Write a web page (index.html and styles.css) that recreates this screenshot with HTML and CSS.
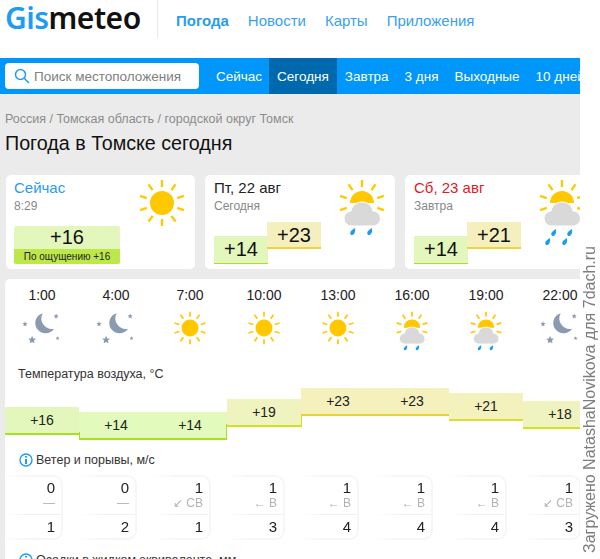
FILE: index.html
```html
<!DOCTYPE html>
<html lang="ru">
<head>
<meta charset="utf-8">
<title>Погода в Томске сегодня</title>
<link rel="stylesheet" href="styles.css">
</head>
<body>
<svg class="defs" width="0" height="0" aria-hidden="true">
  <defs>
    <g id="rays" stroke="#ffc800" stroke-width="2.4" stroke-linecap="butt">
      <path d="M24 1v7M24 40v7M37.5 5.4l-4.1 5.7M10.6 42.6l4.1-5.7M45.9 16.9l-6.7 2.2M2.100 31.100l6.700-2.200M45.900 31.100l-6.700-2.200M2.100 16.900l6.700 2.200M37.500 42.600l-4.100-5.700M10.500 5.400l4.100 5.700"/>
    </g>
    <symbol id="sun" viewBox="0 0 48 48" overflow="visible">
      <use href="#rays"/>
      <circle cx="24" cy="24" r="12" fill="#ffc800"/>
    </symbol>
    <g id="cloud-sun">
      <path d="M24 1v7M37.500 5.400l-4.100 5.700M45.900 16.900l-6.700 2.200M2.100 16.900l6.700 2.200M10.500 5.400l4.100 5.700M2.100 31.100l6.700-2.200M45.900 31.100l-6.700-2.200" stroke="#ffc800" stroke-width="2.400" fill="none"/>
      <path d="M12 24a12 12 0 0 1 24 0z" fill="#ffc800"/>
      <path d="M14 47a7.500 7.500 0 0 1-1-15c1-6 6-9 11-9s10 3 11 9a7.500 7.500 0 0 1 0 15z" fill="#d9d9d9" stroke="#fff" stroke-width="1"/>
    </g>
    <symbol id="rain2" viewBox="0 0 48 60" overflow="visible">
      <use href="#cloud-sun"/>
      <path d="M13 52c2-2 4-3 4-3 .5 3 0 6-2.500 7-2 .5-3-2-1.500-4zM30 52c2-2 4-3 4-3 .5 3 0 6-2.500 7-2 .5-3-2-1.500-4z" fill="#1e9df0"/>
    </symbol>
    <symbol id="rain4" viewBox="0 0 48 60" overflow="visible">
      <use href="#cloud-sun"/>
      <path d="M14 53c2-2 4-3 4-3 .5 3 0 6-2.500 7-2 .5-3-2-1.500-4zM30 53c2-2 4-3 4-3 .5 3 0 6-2.500 7-2 .5-3-2-1.500-4zM8 62c2-2 4-3 4-3 .5 3 0 6-2.500 7-2 .5-3-2-1.500-4zM25 62c2-2 4-3 4-3 .5 3 0 6-2.500 7-2 .5-3-2-1.500-4z" fill="#1e9df0"/>
    </symbol>
    <symbol id="moon" viewBox="0 0 48 48" overflow="visible">
      <path d="M25 3a14.500 14.500 0 1 0 16 22a15 15 0 0 1-16-22z" fill="#8a9bb0"/>
      <path d="M0 14.500l1 2.500 2.500.3-1.900 1.700.6 2.600L0 20.300l-2.200 1.300.6-2.600-1.900-1.700 2.500-.3zM44 3.500l1 2.500 2.500.3-1.900 1.700.6 2.600L44 9.300l-2.200 1.300.6-2.600-1.900-1.700 2.500-.3zM10 35l1.600 3.700 4 .4-3 2.700.9 3.900-3.500-2-3.500 2 .9-3.900-3-2.700 4-.4zM46 35.500l.8 1.800 2 .2-1.500 1.300.4 2-1.700-1-1.700 1 .4-2-1.500-1.300 2-.2z" fill="#8a9bb0"/>
    </symbol>
    <symbol id="info" viewBox="0 0 14 14">
      <circle cx="7" cy="7" r="6" fill="none" stroke="#1e9df0" stroke-width="1.400"/>
      <path d="M7 3v1.600M7 6v5" stroke="#1e9df0" stroke-width="2"/>
    </symbol>
  </defs>
</svg>

<div class="watermark">Загружено NatashaNovikova для 7dach.ru</div>

<div class="page">
  <header class="header">
    <a class="logo"><span class="logo-blue">Gis</span>meteo</a>
    <nav class="main-nav">
      <a class="main-link is-current">Погода</a>
      <a class="main-link">Новости</a>
      <a class="main-link">Карты</a>
      <a class="main-link">Приложения</a>
    </nav>
  </header>

  <div class="tabbar">
    <div class="search">
      <svg class="search-icon" viewBox="0 0 16 16" width="16" height="16"><circle cx="6.500" cy="6.500" r="5" fill="none" stroke="#1e9df0" stroke-width="1.500"/><path d="M10.200 10.200l4.800 4.800" stroke="#1e9df0" stroke-width="1.500"/></svg>
      <span>Поиск местоположения</span>
    </div>
    <a class="tab tab-first">Сейчас</a>
    <a class="tab is-active">Сегодня</a>
    <a class="tab">Завтра</a>
    <a class="tab">3 дня</a>
    <a class="tab">Выходные</a>
    <a class="tab">10 дней</a>
  </div>

  <main class="main">
    <div class="crumbs">Россия / Томская область / городской округ Томск</div>
    <h1 class="title">Погода в Томске сегодня</h1>

    <div class="cards">
      <section class="card card-now">
        <div class="card-head">
          <div>
            <div class="card-title blue">Сейчас</div>
            <div class="card-sub">8:29</div>
          </div>
          <svg class="card-icon sun-now"><use href="#sun"/></svg>
        </div>
        <div class="now-temp">
          <div class="now-value">+16</div>
          <div class="now-feel">По ощущению +16</div>
        </div>
      </section>

      <section class="card card-day">
        <div class="card-title">Пт, 22 авг</div>
        <div class="card-sub">Сегодня</div>
        <div class="range">
          <div class="range-low">+14</div>
          <div class="range-high">+23</div>
        </div>
        <svg class="card-icon weather"><use href="#rain2"/></svg>
      </section>

      <section class="card card-day">
        <div class="card-title red">Сб, 23 авг</div>
        <div class="card-sub">Завтра</div>
        <div class="range">
          <div class="range-low">+14</div>
          <div class="range-high">+21</div>
        </div>
        <svg class="card-icon weather"><use href="#rain4"/></svg>
      </section>
    </div>

    <section class="panel">
      <div class="row hours">
        <div class="hour"><span>1:00</span><svg class="h-icon"><use href="#moon"/></svg></div>
        <div class="hour"><span>4:00</span><svg class="h-icon"><use href="#moon"/></svg></div>
        <div class="hour"><span>7:00</span><svg class="h-icon"><use href="#sun"/></svg></div>
        <div class="hour"><span>10:00</span><svg class="h-icon"><use href="#sun"/></svg></div>
        <div class="hour"><span>13:00</span><svg class="h-icon"><use href="#sun"/></svg></div>
        <div class="hour"><span>16:00</span><svg class="h-icon tall"><use href="#rain2"/></svg></div>
        <div class="hour"><span>19:00</span><svg class="h-icon tall"><use href="#rain2"/></svg></div>
        <div class="hour"><span>22:00</span><svg class="h-icon"><use href="#moon"/></svg></div>
      </div>

      <div class="label label-temp">Температура воздуха, °C</div>

      <div class="row chart">
        <div class="bar t16">+16</div>
        <div class="bar t14 step-left">+14</div>
        <div class="bar t14 step-right-14">+14</div>
        <div class="bar t19 step-right-19">+19</div>
        <div class="bar t23">+23</div>
        <div class="bar t23 step-right-23">+23</div>
        <div class="bar t21 step-right-21">+21</div>
        <div class="bar t18">+18</div>
      </div>

      <div class="label label-info"><svg class="info" width="14" height="14"><use href="#info"/></svg>Ветер и порывы, м/с</div>

      <div class="row wind">
        <div class="wind-col"><div class="wind-cell"><div class="w-top">0</div><div class="w-dir">—</div><div class="w-gust">1</div></div></div>
        <div class="wind-col"><div class="wind-cell"><div class="w-top">0</div><div class="w-dir">—</div><div class="w-gust">2</div></div></div>
        <div class="wind-col"><div class="wind-cell"><div class="w-top">1</div><div class="w-dir">↙ СВ</div><div class="w-gust">1</div></div></div>
        <div class="wind-col"><div class="wind-cell"><div class="w-top">1</div><div class="w-dir">← В</div><div class="w-gust">3</div></div></div>
        <div class="wind-col"><div class="wind-cell"><div class="w-top">1</div><div class="w-dir">← В</div><div class="w-gust">4</div></div></div>
        <div class="wind-col"><div class="wind-cell"><div class="w-top">1</div><div class="w-dir">← В</div><div class="w-gust">4</div></div></div>
        <div class="wind-col"><div class="wind-cell"><div class="w-top">1</div><div class="w-dir">← В</div><div class="w-gust">4</div></div></div>
        <div class="wind-col"><div class="wind-cell"><div class="w-top">1</div><div class="w-dir">↙ СВ</div><div class="w-gust">3</div></div></div>
      </div>

      <div class="label label-info label-rain"><svg class="info" width="14" height="14"><use href="#info"/></svg>Осадки в жидком эквиваленте, мм</div>
    </section>
  </main>
</div>
</body>
</html>
```

FILE: styles.css
```css
* { box-sizing: border-box; }
html, body { margin: 0; padding: 0; height: 559px; overflow: hidden; background: #fff; }
body { font-family: "Liberation Sans", Arial, sans-serif; color: #222; position: relative; }
a { text-decoration: none; color: inherit; }
.defs { position: absolute; }

.watermark {
  position: absolute;
  right: 1px;
  bottom: 6px;
  width: 18px;
  writing-mode: vertical-rl;
  transform: rotate(180deg);
  font-size: 16px;
  line-height: 18px;
  color: #7d7d7d;
  white-space: nowrap;
}

.page { width: 580px; height: 559px; overflow: hidden; display: flex; flex-direction: column; }

.header { height: 58px; display: flex; align-items: flex-start; padding-left: 5px; background: #fff; flex: none; }
.logo {
  font-family: "Noto Sans", sans-serif;
  font-weight: 600;
  font-size: 30px;
  line-height: 36px;
  letter-spacing: -.5px;
  color: #111;
  width: 153px;
  height: 38px;
  border-right: 1px solid #e8e8e8;
}
.logo-blue { color: #1e9df0; }
.main-nav { display: flex; gap: 19px; margin-left: 18px; padding-top: 12px; }
.main-link { font-size: 15px; line-height: 18px; color: #3a9ff2; }
.main-link.is-current { font-weight: 700; color: #2a9bf0; }

.tabbar { height: 36px; background: #0096fa; display: flex; align-items: stretch; padding-left: 5px; flex: none; overflow: hidden; }
.search {
  width: 194px;
  height: 26px;
  margin: 5px 9px 0 0;
  background: #fff;
  border-radius: 4px;
  display: flex;
  align-items: center;
  gap: 4px;
  padding-left: 9px;
  font-size: 13.500px;
  color: #808080;
  flex: none;
}
.search-icon { flex: none; }
.tab { padding: 0 8px; line-height: 37px; font-size: 13.500px; color: #fff; white-space: nowrap; flex: none; }
.tab-first { padding-right: 7px; }
.tab.is-active { background: #0069ad; }

.main { flex: 1; background: #ebebeb; padding: 18px 0 0 5px; overflow: hidden; }
.crumbs { font-size: 12.500px; line-height: 14px; color: #8b8b8b; white-space: nowrap; }
.title { margin: 4px 0 0; font-size: 19.700px; line-height: 26px; font-weight: 400; color: #111; }

.cards { display: flex; gap: 10px; margin: 19px 0 0 1px; width: 600px; }
.card { background: #fff; border-radius: 5px; height: 94px; position: relative; flex: none; }
.card-now { width: 189px; padding: 4px 8px 0; }
.card-day { width: 190px; padding: 4px 9px 0; }
.card-head { display: flex; justify-content: space-between; height: 47px; }
.card-title { font-size: 15px; line-height: 18px; color: #222; }
.card-title.blue { color: #2a9bf0; }
.card-title.red { color: #e01b24; }
.card-sub { font-size: 12px; line-height: 14px; color: #888; margin-top: 2px; }
.sun-now { width: 48px; height: 48px; margin: 0 1px 0 0; }

.now-temp { width: 106px; border-radius: 2px; overflow: hidden; background: #e3f7bc; }
.now-value { height: 23px; font-size: 20px; line-height: 23px; text-align: center; color: #111; }
.now-feel { height: 15px; background: #bde84a; font-size: 10px; line-height: 15px; text-align: center; color: #222; }

.range { display: flex; align-items: flex-start; margin-top: 9px; }
.range-low, .range-high { width: 54px; font-size: 20px; text-align: center; color: #111; line-height: 27px; }
.range-low { height: 28px; background: #e3f7bc; border-bottom: 1px solid #a8e022; margin-top: 14px; }
.range-high { height: 27px; background: #f5efbe; border-bottom: 2px solid #eed43a; margin-left: -1px; }
.weather { position: absolute; left: 133px; top: 4px; width: 48px; height: 60px; overflow: visible; }

.panel { margin: 10px 0 0 0; width: 575px; background: #fff; border-radius: 5px 0 0 0; height: 300px; overflow: hidden; }
.row { display: flex; }

.hours { padding-top: 8px; }
.hour { width: 74px; flex: none; display: flex; flex-direction: column; align-items: center; font-size: 14px; line-height: 16px; color: #222; }
.h-icon { width: 34px; height: 34px; margin-top: 8px; overflow: visible; }
.h-icon.tall { height: 42px; width: 34px; margin-bottom: -8px; }

.label { font-size: 12.500px; line-height: 14px; color: #333; white-space: nowrap; }
.label-temp { margin: 22px 0 0 13px; }
.label-info { display: flex; align-items: center; gap: 3px; margin-left: 14px; height: 14px; }
.info { flex: none; }

.chart { height: 65px; margin-top: 7px; }
.bar {
  width: 74px;
  height: 28px;
  flex: none;
  position: relative;
  text-align: center;
  font-size: 14px;
  line-height: 26px;
  color: #222;
  border-bottom: 2px solid;
}
.t16 { margin-top: 19px; background: #e3f7bc; border-color: #a8e022; }
.t14 { margin-top: 24px; background: #e2fabb; border-color: #a8e022; }
.t19 { margin-top: 11px; background: #eef3bf; border-color: #cfe31f; }
.t23 { margin-top: 0; background: #f5f1bd; border-color: #e8d333; }
.t21 { margin-top: 5px; background: #f3f1bc; border-color: #dbe030; }
.t18 { margin-top: 13px; background: #eef3bf; border-color: #cfe31f; }
.step-left::after, .step-right-14::after, .step-right-19::after, .step-right-23::after, .step-right-21::after {
  content: "";
  position: absolute;
  bottom: -2px;
  width: 1px;
}
.step-left::after { left: 0; height: 8px; background: #a8e022; }
.step-right-14::after { right: 0; height: 16px; background: #a8e022; }
.step-right-19::after { right: -1px; height: 12px; background: #e0dc20; }
.step-right-23::after { right: -1px; height: 7px; background: #e0d830; }
.step-right-21::after { right: -1px; height: 10px; background: #cfe31f; }

.wind { margin: 8px 0 0 -16px; }
.wind-col { width: 74px; flex: none; display: flex; justify-content: flex-end; }
.wind-cell {
  width: 58px;
  height: 65px;
  border: 2px solid #f6f6f6;
  border-left: 0;
  border-radius: 0 9px 9px 0;
  text-align: right;
  padding-right: 6px;
  -webkit-mask-image: linear-gradient(to right, transparent, #000 40%);
  mask-image: linear-gradient(to right, transparent, #000 40%);
}
.w-top { font-size: 15px; line-height: 16px; margin-top: 3px; color: #222; }
.w-dir { font-size: 12px; line-height: 14px; height: 18px; color: #b3b3b3; }
.w-gust { font-size: 15px; line-height: 16px; margin: 0 -6px 0 0; padding: 4px 6px 0 0; border-top: 1px solid #f1f1f1; color: #222; }

.label-rain { margin-top: 13px; }
```
